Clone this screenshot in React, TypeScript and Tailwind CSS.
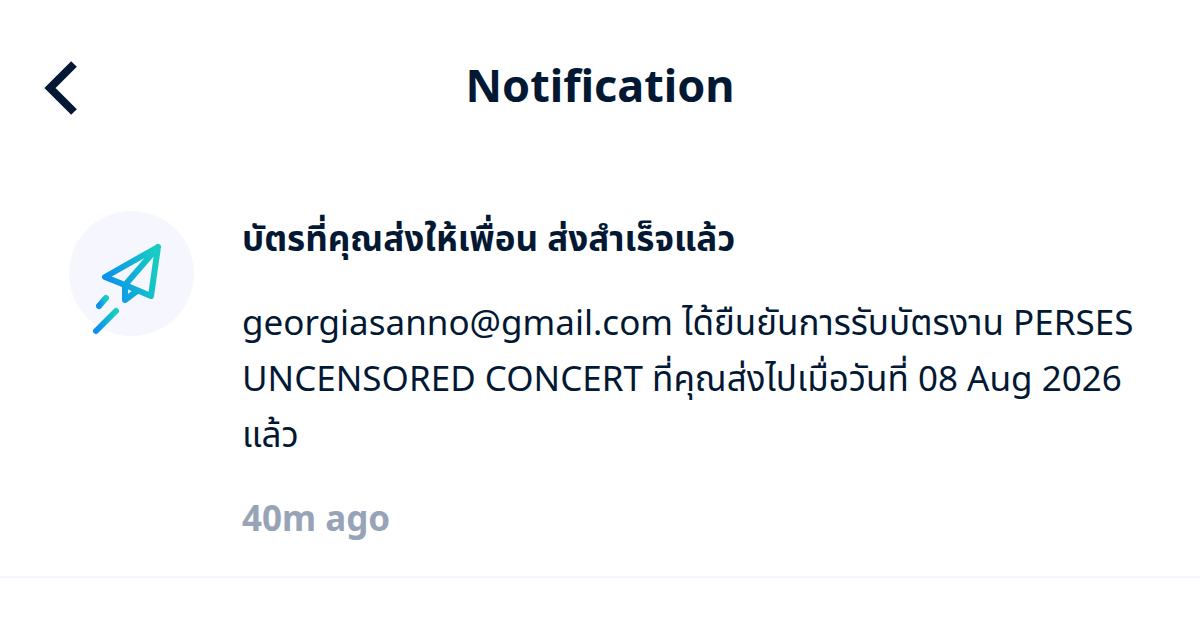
type NotificationItem = {
  id: number;
  title: string;
  message: string;
  time: string;
};

const notifications: NotificationItem[] = [
  {
    id: 1,
    title: "บัตรที่คุณส่งให้เพื่อน ส่งสำเร็จแล้ว",
    message:
      "georgiasanno@gmail.com ได้ยืนยันการรับบัตรงาน PERSES UNCENSORED CONCERT ที่คุณส่งไปเมื่อวันที่ 08 Aug 2026 แล้ว",
    time: "40m ago",
  },
];

function PaperPlaneIcon() {
  return (
    <svg
      viewBox="0 0 126 126"
      className="size-[126px] shrink-0"
      fill="none"
      aria-hidden="true"
    >
      <defs>
        <linearGradient id="plane" x1="0" y1="0.6" x2="1" y2="0.4">
          <stop stopColor="#0a90ee" />
          <stop offset="1" stopColor="#18ccc2" />
        </linearGradient>
      </defs>
      <circle cx="63.5" cy="63.5" r="62.5" fill="#f6f7fe" />
      <g
        stroke="url(#plane)"
        strokeWidth="6"
        strokeLinecap="round"
        strokeLinejoin="round"
      >
        <path d="M90 37 37 67l20 8 26 11zL57 75v15l12-9" />
        <path d="m38 88-7 8" />
        <path d="m48 101-20 20" />
      </g>
    </svg>
  );
}

export default function App() {
  return (
    <main
      lang="th"
      className="bg-white font-['Noto_Sans','Noto_Sans_Thai',sans-serif] text-[#031933]"
    >
      <header className="grid grid-cols-[1fr_auto_1fr] items-center px-11 pt-[54px]">
        <button type="button" aria-label="Back" className="w-fit">
          <svg viewBox="0 0 34 62" className="h-[62px] w-[34px]" fill="none">
            <path d="M30 10 6 34l24 24" stroke="currentColor" strokeWidth="8" />
          </svg>
        </button>
        <h1 className="text-[45px] leading-[60px] font-bold">Notification</h1>
      </header>

      <ul className="mt-[94px]">
        {notifications.map((item) => (
          <li
            key={item.id}
            className="flex gap-12 border-b-2 border-[#f4f5fc] pr-12 pb-[30px] pl-[68px]"
          >
            <PaperPlaneIcon />
            <div className="min-w-0 flex-1">
              <h2 className="text-[35px] leading-14 font-bold">{item.title}</h2>
              <p className="mt-7 text-[35px] leading-14">{item.message}</p>
              <p className="mt-7 text-[35px] leading-14 font-bold text-[#97a3b6]">
                {item.time}
              </p>
            </div>
          </li>
        ))}
      </ul>
    </main>
  );
}
